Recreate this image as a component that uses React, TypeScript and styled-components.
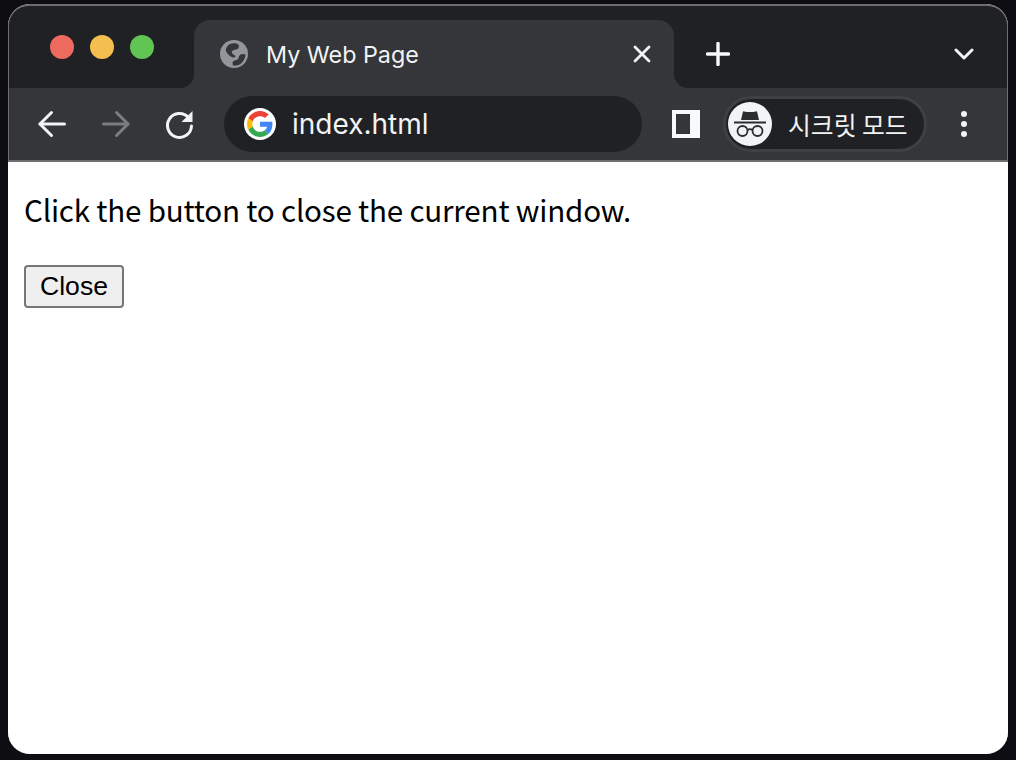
import { createGlobalStyle, styled } from "styled-components";

const GlobalStyle = createGlobalStyle`
    html, body {
        margin: 0;
        padding: 0;
        background: #0e0e12;
    }
`;

const BackIcon = ({ color }: { color: string }) => (
    <svg width="32" height="32" viewBox="0 0 32 32" fill="none" stroke={color} strokeWidth="3" strokeLinecap="round" strokeLinejoin="round">
        <path d="M28.5 16H4" />
        <path d="M15.5 4.5L4 16l11.5 11.5" />
    </svg>
);

const ForwardIcon = ({ color }: { color: string }) => (
    <svg width="32" height="32" viewBox="0 0 32 32" fill="none" stroke={color} strokeWidth="3" strokeLinecap="round" strokeLinejoin="round">
        <path d="M3.5 16H28" />
        <path d="M16.5 4.5L28 16 16.5 27.5" />
    </svg>
);

const ReloadIcon = () => (
    <svg width="32" height="32" viewBox="0 0 32 32" fill="none">
        <path d="M24.5 9.500A12 12 0 1 0 27.5 18" stroke="#f1f3f4" strokeWidth="3" strokeLinecap="round" />
        <path d="M28.5 3v11h-11z" fill="#f1f3f4" />
    </svg>
);

const GlobeIcon = () => (
    <svg width="28" height="28" viewBox="0 0 28 28">
        <circle cx="14" cy="14" r="14" fill="#92969b" />
        <path d="M10 4c2.500-1 6-1 8.500.5.500 2 .5 3.500-1 4.500-2 1.200-4.500.5-5.500 2.500-.8 1.700 1.500 3 3 4 1 .8.500 2-1 2-2.500 0-5-2-7-4.500C5.500 11 5.500 9 6.500 7.500 7.500 6 8.500 4.700 10 4z" fill="#35363a" />
        <path d="M25.500 14.500c-1.500-.8-3.500-.8-5 0-1.800 1-1.500 3-2.500 4.500-1 1.300-3 1-4.500 2-1 .8-1.200 2.500-.5 4.500 2 .4 5 0 7.500-1.500 2.500-1.800 4.800-5.500 5-9.500z" fill="#35363a" />
    </svg>
);

const CloseIcon = () => (
    <svg width="18" height="18" viewBox="0 0 18 18" fill="none" stroke="#f1f3f4" strokeWidth="2.800" strokeLinecap="round">
        <path d="M2 2l14 14M16 2L2 16" />
    </svg>
);

const PlusIcon = () => (
    <svg width="24" height="24" viewBox="0 0 24 24" fill="none" stroke="#f8f9fa" strokeWidth="3.400" strokeLinecap="round">
        <path d="M12 1.500v21M1.500 12h21" />
    </svg>
);

const ChevronIcon = () => (
    <svg width="20" height="14" viewBox="0 0 20 14" fill="none" stroke="#f1f3f4" strokeWidth="3" strokeLinecap="round" strokeLinejoin="round">
        <path d="M2 3l8 8 8-8" />
    </svg>
);

const GoogleLogo = () => (
    <svg width="26" height="26" viewBox="0 0 48 48">
        <path fill="#EA4335" d="M24 9.500c3.540 0 6.710 1.220 9.210 3.600l6.850-6.850C35.900 2.380 30.470 0 24 0 14.620 0 6.510 5.380 2.560 13.220l7.980 6.190C12.430 13.720 17.740 9.500 24 9.500z" />
        <path fill="#4285F4" d="M46.980 24.550c0-1.570-.15-3.090-.38-4.550H24v9.020h12.940c-.58 2.960-2.260 5.480-4.780 7.180l7.730 6c4.510-4.180 7.090-10.360 7.090-17.650z" />
        <path fill="#FBBC05" d="M10.530 28.590c-.48-1.450-.76-2.990-.76-4.590s.27-3.140.76-4.590l-7.980-6.190C.92 16.460 0 20.120 0 24c0 3.880.92 7.540 2.560 10.780l7.970-6.190z" />
        <path fill="#34A853" d="M24 48c6.480 0 11.930-2.130 15.890-5.810l-7.730-6c-2.150 1.450-4.920 2.300-8.160 2.300-6.260 0-11.570-4.220-13.470-9.910l-7.980 6.190C6.510 42.620 14.620 48 24 48z" />
    </svg>
);

const SidePanelIcon = () => (
    <svg width="28" height="28" viewBox="0 0 28 28">
        <path fill="#f8f9fa" fillRule="evenodd" d="M0 0h28v28H0zM4 4v20h14V4z" />
    </svg>
);

const IncognitoIcon = () => (
    <svg width="34" height="28" viewBox="0 0 34 28" fill="none">
        <path d="M8 10L9.800 2.200c.1-.6.700-1 1.300-.8L14 2h6l2.900-.6c.6-.2 1.200.2 1.300.8L26 10z" fill="#2b2c30" />
        <path d="M1 12.500h32" stroke="#2b2c30" strokeWidth="2" />
        <circle cx="9.500" cy="21" r="5" stroke="#2b2c30" strokeWidth="1.800" />
        <circle cx="24.500" cy="21" r="5" stroke="#2b2c30" strokeWidth="1.800" />
        <path d="M14.500 20c1.500-1 3.500-1 5 0" stroke="#2b2c30" strokeWidth="1.800" />
    </svg>
);

const MenuDots = () => (
    <svg width="10" height="28" viewBox="0 0 10 28" fill="#f1f3f4">
        <circle cx="5" cy="4" r="3" />
        <circle cx="5" cy="14" r="3" />
        <circle cx="5" cy="24" r="3" />
    </svg>
);

const App = () => {
    return (
        <Page>
            <GlobalStyle />
            <BrowserWindow>
                <TitleBar>
                    <TrafficArea>
                        <TrafficLight $color="#ec6a5e" />
                        <TrafficLight $color="#f4bf4f" />
                        <TrafficLight $color="#61c554" />
                    </TrafficArea>
                    <TabSlot>
                        <Tab>
                            <GlobeIcon />
                            <TabTitle>My Web Page</TabTitle>
                            <TabClose><CloseIcon /></TabClose>
                        </Tab>
                    </TabSlot>
                    <TabStripEnd>
                        <PlusIcon />
                        <ChevronIcon />
                    </TabStripEnd>
                </TitleBar>
                <Toolbar>
                    <NavButton><BackIcon color="#f1f3f4" /></NavButton>
                    <NavButton><ForwardIcon color="#7b7d80" /></NavButton>
                    <NavButton><ReloadIcon /></NavButton>
                    <Omnibox>
                        <GoogleBadge><GoogleLogo /></GoogleBadge>
                        <Url>index.html</Url>
                    </Omnibox>
                    <SidePanelButton><SidePanelIcon /></SidePanelButton>
                    <IncognitoPill>
                        <IncognitoBadge><IncognitoIcon /></IncognitoBadge>
                        <IncognitoLabel>시크릿 모드</IncognitoLabel>
                    </IncognitoPill>
                    <MenuButton><MenuDots /></MenuButton>
                </Toolbar>
                <Content>
                    <Message>Click the button to close the current window.</Message>
                    <CloseButton>Close</CloseButton>
                </Content>
            </BrowserWindow>
        </Page>
    );
}

export default App;

const Page = styled.div`
    width: 1016px;
    height: 760px;
    padding: 4px 8px 6px;
    box-sizing: border-box;
    overflow: hidden;
`

const BrowserWindow = styled.div`
    width: 1000px;
    height: 750px;
    display: flex;
    flex-direction: column;
    border-radius: 22px;
    overflow: hidden;
    background: #ffffff;
    box-shadow: inset 0 0 0 1px #6e6f73;
`

const TitleBar = styled.div`
    display: flex;
    height: 84px;
    flex-shrink: 0;
    background: #35363a;
    border: solid #6e6f73;
    border-width: 2px 1px 0;
    border-radius: 22px 22px 0 0;
    box-sizing: border-box;
`

const TrafficArea = styled.div`
    width: 185px;
    display: flex;
    gap: 16px;
    padding: 29px 0 0 41px;
    box-sizing: border-box;
    background: #202124;
    border-radius: 20px 0 14px 0;
`

const TrafficLight = styled.span<{ $color: string }>`
    width: 24px;
    height: 24px;
    border-radius: 50%;
    background: ${(props) => props.$color};
`

const TabSlot = styled.div`
    width: 480px;
    padding-top: 14px;
    box-sizing: border-box;
    background: #202124;
`

const Tab = styled.div`
    height: 100%;
    display: flex;
    align-items: center;
    padding: 0 23px 0 26px;
    box-sizing: border-box;
    background: #35363a;
    border-radius: 16px 16px 0 0;
`

const TabTitle = styled.span`
    margin-left: 18px;
    font-family: Inter, "Liberation Sans", sans-serif;
    font-size: 23.300px;
    color: #f1f3f4;
`

const TabClose = styled.span`
    margin-left: auto;
    display: flex;
`

const TabStripEnd = styled.div`
    flex: 1;
    display: flex;
    align-items: center;
    justify-content: space-between;
    padding: 14px 33px 0 32px;
    background: #202124;
    border-radius: 0 20px 0 14px;
`

const Toolbar = styled.div`
    height: 74px;
    flex-shrink: 0;
    display: flex;
    align-items: center;
    padding: 0 1px 0 11px;
    box-sizing: border-box;
    background: #35363a;
    border: solid #6e6f73;
    border-width: 0 1px 2px;
`

const NavButton = styled.span`
    width: 64px;
    display: flex;
    justify-content: center;
`

const Omnibox = styled.div`
    width: 418px;
    height: 56px;
    margin-left: 12px;
    display: flex;
    align-items: center;
    padding-left: 20px;
    box-sizing: border-box;
    border-radius: 28px;
    background: #202124;
`

const GoogleBadge = styled.span`
    width: 32px;
    height: 32px;
    display: flex;
    align-items: center;
    justify-content: center;
    border-radius: 50%;
    background: #ffffff;
`

const Url = styled.span`
    margin-left: 16px;
    font-family: Inter, "Liberation Sans", sans-serif;
    font-size: 28px;
    color: #f1f3f4;
`

const SidePanelButton = styled.span`
    margin-left: 30px;
    display: flex;
`

const IncognitoPill = styled.div`
    width: 204px;
    height: 56px;
    margin-left: 23px;
    display: flex;
    align-items: center;
    padding-left: 2px;
    box-sizing: border-box;
    border: 3px solid #3f4044;
    border-radius: 28px;
    background: #202124;
`

const IncognitoBadge = styled.span`
    width: 44px;
    height: 44px;
    display: flex;
    align-items: center;
    justify-content: center;
    border-radius: 50%;
    background: #f1f3f4;
`

const IncognitoLabel = styled.span`
    margin-left: 16px;
    font-family: "Noto Sans CJK KR", sans-serif;
    font-size: 24.800px;
    color: #f1f3f4;
`

const MenuButton = styled.span`
    margin-left: 32px;
    display: flex;
`

const Content = styled.div`
    flex: 1;
    padding: 30px 16px;
    background: #ffffff;
`

const Message = styled.p`
    margin: 0 0 37px;
    font-family: "Noto Sans CJK KR", sans-serif;
    font-size: 29.600px;
    letter-spacing: -0.200px;
    line-height: 36px;
    color: #000000;
`

const CloseButton = styled.button`
    display: block;
    width: 100px;
    height: 43px;
    padding: 0;
    font-family: "Liberation Sans", Arial, sans-serif;
    font-size: 26.600px;
    color: #000000;
    background: #efefef;
    border: 2px solid #767676;
    border-radius: 4px;
`
